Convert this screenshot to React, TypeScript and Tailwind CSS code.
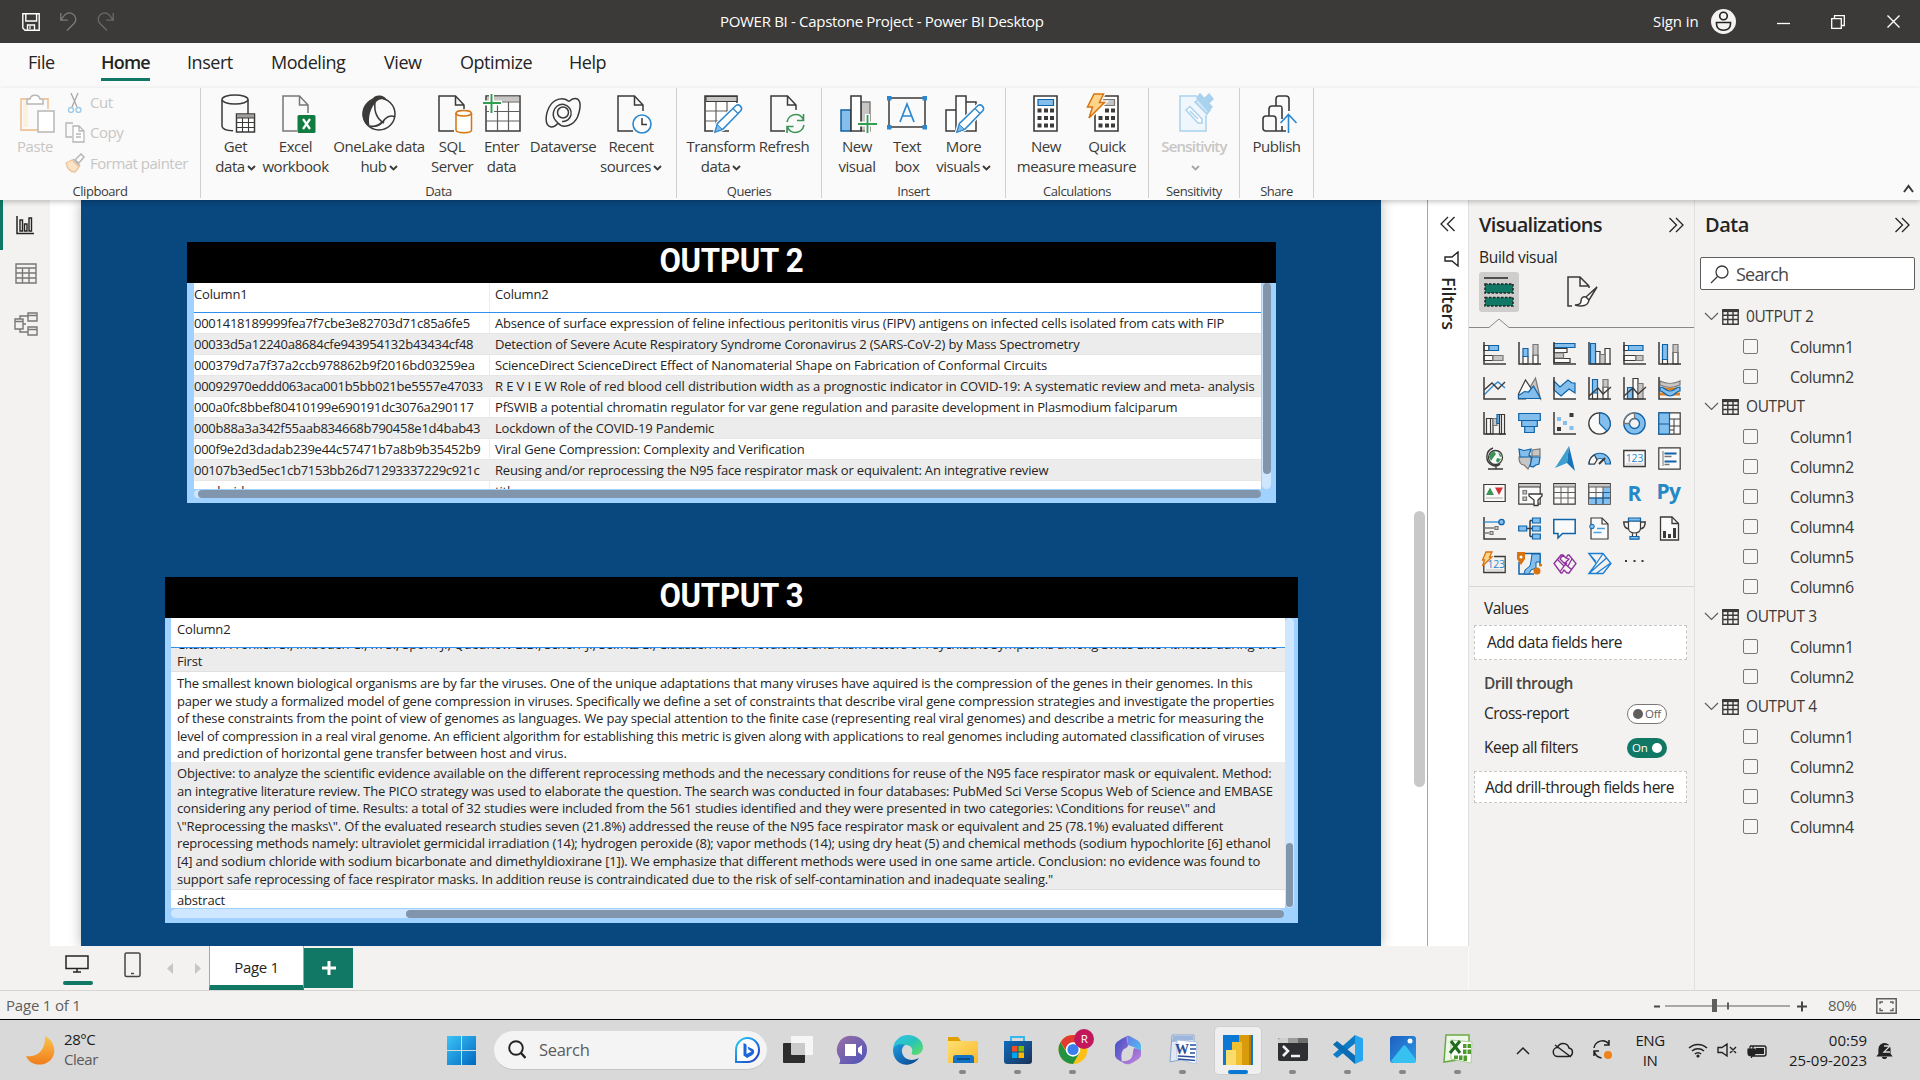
import React from "react";

type Kids = { children?: React.ReactNode };

const DARK = "#3b3a39";
const BLUE = "#83beec";
const BSTROKE = "#0f63a8";
const GRAY = "#c8c6c4";
const GSTROKE = "#797775";
const WHITE = "#fafafa";

/* ---------- generic helpers ---------- */

function Svg({ w, h, className = "", children }: Kids & { w: number; h: number; className?: string }) {
  return (
    <svg width={w} height={h} viewBox={`0 0 ${w} ${h}`} fill="none" className={`shrink-0 ${className}`}>
      {children}
    </svg>
  );
}

function Caret({ color = DARK }: { color?: string }) {
  return (
    <Svg w={9} h={6} className="ml-[2px] mt-[4px]">
      <path d="M1 1l3.5 3.4L8 1" stroke={color} strokeWidth="1.9" />
    </Svg>
  );
}

/* ---------- title bar ---------- */

function TitleBar() {
  return (
    <header className="flex h-[43px] shrink-0 items-center bg-[#3b3a38] text-[15px] text-white">
      <div className="flex w-[720px] items-center pl-[22px]">
        <Svg w={18} h={18}>
          <path d="M.8.8h16.4v16.4H3L.8 15z M3.8 1v7h10.8V1 M5.5 17v-5h7v5" stroke="#fff" strokeWidth="1.4" />
          <path d="M8 13v3" stroke="#fff" strokeWidth="1.2" />
        </Svg>
        <Svg w={17} h={19} className="ml-[20px]">
          <path d="M.8 1v7.2h7M1 8C4 2.5 8-.5 12 1.5c4 2 5 6.5 2 10L7 18.5" stroke="#7d7c7b" strokeWidth="1.3" />
        </Svg>
        <Svg w={17} h={19} className="ml-[20px]">
          <path d="M16.2 1v7.2h-7M16 8C13 2.5 9-.5 5 1.5c-4 2-5 6.5-2 10l7 7" stroke="#6b6a69" strokeWidth="1.3" />
        </Svg>
      </div>
      <div className="w-[933px] whitespace-nowrap tracking-[-0.31px]">POWER BI - Capstone Project - Power BI Desktop</div>
      <div className="w-[58px] whitespace-nowrap tracking-[-0.1px]">Sign in</div>
      <Svg w={25} h={25}>
        <circle cx="12.5" cy="12.5" r="12.5" fill="#f3f2f1" />
        <circle cx="12.5" cy="7" r="3.8" stroke="#222" strokeWidth="1.6" />
        <path d="M5.5 13.5h14V15c0 4-3 6.200-7 6.200S5.500 19 5.500 15z" stroke="#222" strokeWidth="1.6" />
      </Svg>
      <Svg w={13} h={14} className="ml-[41px]">
        <path d="M0 8.500h13" stroke="#fff" strokeWidth="1.300" />
      </Svg>
      <Svg w={14} h={14} className="ml-[41px]">
        <path d="M.7 3.700h9.600v9.600H.7zM3.500 3.500V.7h9.800v9.800h-3" stroke="#fff" strokeWidth="1.300" />
      </Svg>
      <Svg w={13} h={13} className="ml-[42px]">
        <path d="M.5.5l12 12M12.500.5l-12 12" stroke="#fff" strokeWidth="1.400" />
      </Svg>
    </header>
  );
}

/* ---------- menu ---------- */

function MenuBar() {
  return (
    <nav className="flex h-[45px] shrink-0 text-[18px] leading-[38px] text-[#252423]">
      <span className="w-[101px] pl-[28px]">File</span>
      <span className="flex w-[86px] items-start">
        <span className="h-[38px] border-b-[3px] border-[#117865] font-semibold tracking-[-0.8px]">Home</span>
      </span>
      <span className="w-[84px]">Insert</span>
      <span className="w-[113px]">Modeling</span>
      <span className="w-[76px]">View</span>
      <span className="w-[109px]">Optimize</span>
      <span>Help</span>
    </nav>
  );
}

/* ---------- ribbon icons: 40 x 40 box ---------- */

function Pencil() {
  return (
    <>
      <path d="M12 39l2.500-8.500L33 12.500c3-2 7 2 5 5L20 36z" fill="#fff" stroke="#fafafa" strokeWidth="4" />
      <path d="M12 39l2.500-8.500L33 12.500c3-2 7 2 5 5L20 36z" fill="#fff" stroke="#2b88d0" strokeWidth="1.500" />
      <path d="M12 39l2.300-7.500 5.200 5z" fill={BLUE} stroke="#2b88d0" />
      <path d="M30 15.500l5 5" stroke="#2b88d0" strokeWidth="1.300" />
    </>
  );
}

const ribbonIcons: Record<string, React.ReactNode> = {
  getdata: (
    <g transform="translate(5 0)">
      <path d="M27 7v14M1 7v26c0 2.500 4 4.500 11 4.800" stroke={DARK} strokeWidth="1.500" />
      <ellipse cx="14" cy="6.500" rx="13" ry="4.500" stroke={DARK} strokeWidth="1.500" />
      <path d="M15.500 21h18v18h-18z" fill="#fff" stroke={DARK} strokeWidth="1.500" />
      <path d="M16 21.500h17v3.500H16z" fill="#a19f9d" />
      <path d="M15.500 25h18M15.500 29.500h18M15.500 34.500h18M21.500 25v14M27.500 25v14" stroke={DARK} strokeWidth="1.100" />
    </g>
  ),
  excel: (
    <g transform="translate(6 0)">
      <path d="M26 20V12L17.500 3H1v35h14M17.500 3v9H26" stroke={GSTROKE} strokeWidth="1.500" />
      <rect x="15.500" y="22" width="18" height="18" rx="1.500" fill="#107c41" />
      <path d="M21 26l7 10M28 26l-7 10" stroke="#fff" strokeWidth="2.200" />
    </g>
  ),
  onelake: (
    <g transform="translate(2 0)">
      <circle cx="18" cy="21" r="16" stroke={DARK} strokeWidth="1.500" />
      <path d="M11 7C13 1 24 1 26 8c-5-3-8-2-11 1C10 14 6 25 9 34 2 30 0 22 3 15c1.500-3 4-6 8-8z" fill={DARK} />
      <path d="M14 9c-1 9 2 17 9 21M9 34c8-1 12-3 15-8 4-4 8-3 10-2M9 33c6 1 9 0 14-5" stroke={DARK} strokeWidth="1.500" />
    </g>
  ),
  sql: (
    <g transform="translate(6 0)">
      <path d="M26 16V12L17.500 3H1v35h15M17.500 3v9H26" stroke={DARK} strokeWidth="1.500" />
      <path d="M18 20v17c0 1.500 3 2.700 8 2.700s7.500-1.200 7.500-2.700V20" fill="#fff" stroke="#d8730f" strokeWidth="1.500" />
      <ellipse cx="25.700" cy="20.200" rx="7.700" ry="2.700" fill="#fff" stroke="#d8730f" strokeWidth="1.500" />
    </g>
  ),
  enter: (
    <g>
      <path d="M4 3h34v35H4z" stroke={DARK} strokeWidth="1.500" fill="#fff" />
      <path d="M5 3.500h32v5H5z" fill={GRAY} />
      <path d="M4 9h34M4 18.500h34M4 28h34M15.500 9v29M26.500 9v29" stroke="#605e5c" strokeWidth="1.200" />
      <path d="M0 10h20M9.500 0v20" stroke="#fafafa" strokeWidth="5" />
      <path d="M1 10h18M9.500 1v19" stroke="#2f9e4f" strokeWidth="1.900" />
    </g>
  ),
  dataverse: (
    <g transform="translate(2 4)" stroke={DARK} strokeWidth="1.500">
      <path d="M24 4.500C19-.5 9 1.500 4.500 9.500 0 18-.5 29 6 30c3 .5 5-1.500 7-4" />
      <path d="M13 26c5 6.500 16 2 19.500-6C36 11 36.500 2 30.500 1.500c-3-.3-4.500 1-6.500 3" />
      <path d="M13 26c-3.500-3-5.500-7-4.500-11C9.500 10 14 6.500 19 7.500c5 1 8 6 7 10.500-1 4-4.500 7-9 6.500" />
      <circle cx="18" cy="15.500" r="5.500" />
    </g>
  ),
  recent: (
    <g transform="translate(6 0)">
      <path d="M26 18V12L17.500 3H1v35h15M17.500 3v9H26" stroke={DARK} strokeWidth="1.500" />
      <circle cx="25" cy="31" r="9" fill="#fff" stroke="#2b88d0" strokeWidth="1.600" />
      <path d="M25 25v6.500h5" stroke={DARK} strokeWidth="1.500" />
    </g>
  ),
  transform: (
    <g transform="translate(2 0)">
      <path d="M34 18V3H2v35h24" fill="#fff" stroke={DARK} strokeWidth="1.600" />
      <path d="M3 3.500h31v5H3z" fill={GRAY} stroke={DARK} />
      <path d="M2 18h30M2 28h20M13 9v29M24 9v20" stroke="#605e5c" strokeWidth="1.200" />
      <Pencil />
    </g>
  ),
  refresh: (
    <g transform="translate(6 0)">
      <path d="M26 17V12L17.500 3H1v35h14M17.500 3v9H26" stroke={DARK} strokeWidth="1.500" />
      <path d="M17 29c1-5 5-7.500 9-7.500 3.500 0 6 2 7.500 5.500M33.500 21v6.500H27M34 32c-1 5-5 7.500-9 7.500-3.500 0-6-2-7.500-5.500M17 40v-6.500h6.500" stroke="#3c9455" strokeWidth="1.600" />
    </g>
  ),
  newvisual: (
    <g transform="translate(3 0)">
      <path d="M21 9h9v29h-9z" fill={GRAY} stroke={GSTROKE} strokeWidth="1.400" />
      <path d="M1 17h10v21H1z" fill={BLUE} stroke={BSTROKE} strokeWidth="1.500" />
      <path d="M11 3h10v35H11z" fill="#fff" stroke={DARK} strokeWidth="1.600" />
      <path d="M18 31h20M27.500 21v20" stroke="#fafafa" strokeWidth="5" />
      <path d="M18 31h19M27.500 22v18" stroke="#2f9e4f" strokeWidth="1.800" />
    </g>
  ),
  textbox: (
    <g>
      <path d="M2 5h36v29H2z" stroke={DARK} strokeWidth="1.500" />
      <path d="M0 3h4.500v4.500H0zM35.500 3H40v4.500h-4.500zM0 32h4.500v4.500H0zM35.500 32H40v4.500h-4.500z" fill="#2b88d0" />
      <path d="M13 29l7-18 7 18M15.300 23h9.400" stroke="#2b88d0" strokeWidth="1.700" />
    </g>
  ),
  morevisuals: (
    <g transform="translate(1 0)">
      <path d="M1 17h10v21H1zM11 3h10v35H11zM21 9h10v29H21z" fill="#fff" stroke={DARK} strokeWidth="1.500" />
      <Pencil />
    </g>
  ),
  newmeasure: (
    <g transform="translate(7 0)">
      <path d="M1 3h23v35H1z" fill="#fff" stroke={DARK} strokeWidth="1.600" />
      <path d="M5 6.500h15.500v6H5z" fill={BLUE} stroke={BSTROKE} strokeWidth="1.200" />
      <path d="M4.500 15.500h4v4h-4zM11 15.500h4v4h-4zM17 15.500h4v4h-4zM4.500 23h4v4h-4zM11 23h4v4h-4zM17 23h4v4h-4zM4.500 30.500h4v4h-4zM11 30.500h4v4h-4zM17 30.500h4v4h-4z" fill={DARK} />
    </g>
  ),
  quick: (
    <g transform="translate(7 0)">
      <path d="M1 3h23v35H1z" fill="#fff" stroke={DARK} strokeWidth="1.600" />
      <path d="M8 6.500h12.500v6H8z" fill={GRAY} stroke={GSTROKE} strokeWidth="1.200" />
      <path d="M11 15.500h4v4h-4zM17 15.500h4v4h-4zM4.500 23h4v4h-4zM11 23h4v4h-4zM17 23h4v4h-4zM4.500 30.500h4v4h-4zM11 30.500h4v4h-4zM17 30.500h4v4h-4z" fill={DARK} />
      <path d="M0 1h9.500l-4 8.500h5L-5 25l3.500-11h-5z" fill="#fac775" stroke="#fafafa" strokeWidth="4" />
      <path d="M0 1h9.500l-4 8.500h5L-5 25l3.500-11h-5z" fill="#fcd48a" stroke="#d8730f" strokeWidth="1.500" />
    </g>
  ),
  sensitivity: (
    <g transform="translate(5 0)" stroke="#a9d2ee" strokeWidth="1.500">
      <path d="M18 3H1v35h26V22" fill="#eff6fc" />
      <path d="M7 17l4-3.500L23 26v4h-4zM11 18l8 8" fill="#fff" />
      <path d="M16 9l4-3 11 11-3 4z" fill="#cfe6f6" />
      <path d="M18 5l3-4 12 13-4 4zM26 5l4-4 4 5-4 4z" fill="#a9d2ee" />
    </g>
  ),
  publish: (
    <g transform="translate(5 0)" stroke={DARK} strokeWidth="1.600">
      <path d="M14 13V6c0-2 1-3 3-3h7c2 0 3 1 3 3v12M7 23v-7c0-2 1-3 3-3h8c2 0 2 1 2 3v10M24 38H4c-2 0-3-1-3-3V26c0-2 1-3 3-3h7c2 0 3 1 3 3v12M20 33v5" />
      <path d="M26.500 40V22M18.500 30l8-8.500 8 8.500" stroke="#2b88d0" />
    </g>
  ),
};

function RibbonItem({ icon, a, b, w, caret, muted }: { icon: string; a: string; b?: string; w: string; caret?: boolean; muted?: boolean }) {
  return (
    <div className={`flex shrink-0 flex-col items-center whitespace-nowrap leading-[20px] ${w} ${muted ? "text-[#c8c6c4]" : "text-[#3b3a39]"}`}>
      <Svg w={40} h={41} className="mb-[2px] overflow-visible">
        {ribbonIcons[icon]}
      </Svg>
      <span className={muted ? "font-semibold tracking-[-0.8px]" : ""}>{a}</span>
      <span className="flex h-[20px] items-center">
        {b}
        {caret && <Caret color={muted ? "#a8a6a4" : DARK} />}
      </span>
    </div>
  );
}

function Group({ w, label, children, pad = "" }: Kids & { w: string; label: string; pad?: string }) {
  return (
    <section className={`flex shrink-0 flex-col border-r border-[#d2d0ce] ${w}`}>
      <div className={`flex h-[94px] shrink-0 pt-[5px] ${pad}`}>{children}</div>
      <div className="text-center text-[13px] leading-[18px] text-[#3b3a39]">{label}</div>
    </section>
  );
}

function Ribbon() {
  return (
    <div className="relative z-10 flex h-[112px] shrink-0 bg-[#fafafa] text-[15px] shadow-[0_2px_5px_rgba(0,0,0,0.22)]">
      <div className="flex h-[110px]">
        <Group w="w-[201px]" label="Clipboard">
          <div className="flex w-[65px] flex-col items-center pl-[5px] leading-[20px] text-[#c8c6c4]">
            <Svg w={36} h={41} className="mb-[2px] ml-[6px]">
              <path d="M10 6H1v31h17M24 6h4v10" stroke="#f0c9a0" strokeWidth="1.800" />
              <path d="M3 8h5v26H3z" fill="#fdf1dc" />
              <path d="M7 11V6h3c1-5 9-5 10 0h3v5z" fill="#fff" stroke="#b9b7b5" strokeWidth="1.500" />
              <path d="M18 18h16v21H18z" fill="#fff" stroke="#b9b7b5" strokeWidth="1.500" />
            </Svg>
            <span>Paste</span>
          </div>
          <div className="flex flex-col text-[#c8c6c4]">
            <div className="flex h-[30px] items-center pb-[11px]">
              <Svg w={20} h={20} className="mr-[5px]">
                <path d="M6 0l6 14M13 0L7 14" stroke="#a8a6a4" strokeWidth="1.300" />
                <circle cx="6" cy="17" r="2.500" stroke="#9fcbe9" strokeWidth="1.400" />
                <circle cx="13.500" cy="17" r="2.500" stroke="#9fcbe9" strokeWidth="1.400" />
              </Svg>
              Cut
            </div>
            <div className="flex h-[30px] items-center pb-[11px]">
              <Svg w={20} h={21} className="mr-[5px]">
                <path d="M7 15H1V1h7" stroke="#b9b7b5" strokeWidth="1.400" />
                <path d="M8 4h6l5 5v11H8zM14 4v5h5M11 12h5M11 15h5" fill="#fff" stroke="#b9b7b5" strokeWidth="1.300" />
              </Svg>
              Copy
            </div>
            <div className="flex h-[29px] items-center whitespace-nowrap pb-[9px] tracking-[-0.5px]">
              <Svg w={20} h={20} className="mr-[5px]">
                <path d="M10 7l6-6 3 3-5 6z M8 6l7 7" stroke="#b9b7b5" strokeWidth="1.500" />
                <path d="M7 7l7 7-4 5c-5 0-8-4-9-9z" fill="#fbe3c8" stroke="#eec39a" strokeWidth="1.300" />
              </Svg>
              Format painter
            </div>
          </div>
        </Group>
        <Group w="w-[476px]" label="Data" pad="pl-[6px]">
          <RibbonItem icon="getdata" a="Get" b="data" caret w="w-[57px]" />
          <RibbonItem icon="excel" a="Excel" b="workbook" w="w-[63px]" />
          <RibbonItem icon="onelake" a="OneLake data" b="hub" caret w="w-[104px]" />
          <RibbonItem icon="sql" a="SQL" b="Server" w="w-[42px]" />
          <RibbonItem icon="enter" a="Enter" b="data" w="w-[57px]" />
          <RibbonItem icon="dataverse" a="Dataverse" w="w-[66px]" />
          <RibbonItem icon="recent" a="Recent" b="sources" caret w="w-[70px]" />
        </Group>
        <Group w="w-[145px]" label="Queries" pad="pl-[10px]">
          <RibbonItem icon="transform" a="Transform" b="data" caret w="w-[68px]" />
          <RibbonItem icon="refresh" a="Refresh" w="w-[58px]" />
        </Group>
        <Group w="w-[184px]" label="Insert" pad="pl-[14px]">
          <RibbonItem icon="newvisual" a="New" b="visual" w="w-[42px]" />
          <RibbonItem icon="textbox" a="Text" b="box" w="w-[58px]" />
          <RibbonItem icon="morevisuals" a="More" b="visuals" caret w="w-[55px]" />
        </Group>
        <Group w="w-[143px]" label="Calculations" pad="pl-[10px]">
          <RibbonItem icon="newmeasure" a="New" b="measure" w="w-[60px]" />
          <RibbonItem icon="quick" a="Quick" b="measure" w="w-[62px]" />
        </Group>
        <Group w="w-[91px]" label="Sensitivity">
          <RibbonItem icon="sensitivity" a="Sensitivity" caret muted w="w-[90px]" />
        </Group>
        <Group w="w-[74px]" label="Share">
          <RibbonItem icon="publish" a="Publish" w="w-[73px]" />
        </Group>
      </div>
      <div className="flex flex-1 items-end justify-end pb-[7px] pr-[6px]">
        <Svg w={11} h={9}>
          <path d="M1 8l4.500-6L10 8" stroke={DARK} strokeWidth="2" />
        </Svg>
      </div>
    </div>
  );
}

/* ---------- left navigation ---------- */

function LeftNav() {
  return (
    <aside className="flex w-[50px] shrink-0 flex-col bg-[#f3f2f1]">
      <div className="flex h-[50px] border-l-[3px] border-[#117865] pl-[13px] pt-[16px]">
        <Svg w={18} h={19}>
          <path d="M1 0v17.500h17" stroke="#252423" strokeWidth="1.500" />
          <path d="M4 4h2.500v11H4zM8.500 8H11v7H8.500zM13 2h2.500v13H13z" stroke="#252423" strokeWidth="1.400" />
        </Svg>
      </div>
      <div className="flex h-[50px] pl-[15px] pt-[13px]">
        <Svg w={22} h={21}>
          <path d="M1 1h20v19H1zM1 5h20M1 10h20M1 15h20M7.500 5v15M14 5v15" stroke="#797775" strokeWidth="1.400" />
        </Svg>
      </div>
      <div className="flex h-[50px] pl-[14px] pt-[12px]">
        <Svg w={24} h={24}>
          <path d="M1 7h8v10H1zM14 1h9v8h-9zM14 15h9v8h-9zM1 9.500h8M14 3.500h9M14 17.500h9M6 7V4h8M6 17v3h8M9 12h3" stroke="#797775" strokeWidth="1.400" />
        </Svg>
      </div>
    </aside>
  );
}

/* ---------- report visuals ---------- */

function VisualTitle({ children }: Kids) {
  return (
    <div className="flex h-[41px] shrink-0 items-center justify-center bg-black pb-[3px] font-['Roboto',sans-serif] text-[33.5px] font-bold leading-none text-white">
      <span className="scale-x-[0.93] tracking-[-0.3px]">{children}</span>
    </div>
  );
}

const rows2: [string, string][] = [
  ["0001418189999fea7f7cbe3e82703d71c85a6fe5", "Absence of surface expression of feline infectious peritonitis virus (FIPV) antigens on infected cells isolated from cats with FIP"],
  ["00033d5a12240a8684cfe943954132b43434cf48", "Detection of Severe Acute Respiratory Syndrome Coronavirus 2 (SARS-CoV-2) by Mass Spectrometry"],
  ["000379d7a7f37a2ccb978862b9f2016bd03259ea", "ScienceDirect ScienceDirect Effect of Nanomaterial Shape on Fabrication of Conformal Circuits"],
  ["00092970eddd063aca001b5bb021be5557e47033", "R E V I E W Role of red blood cell distribution width as a prognostic indicator in COVID-19: A systematic review and meta- analysis"],
  ["000a0fc8bbef80410199e690191dc3076a290117", "PfSWIB a potential chromatin regulator for var gene regulation and parasite development in Plasmodium falciparum"],
  ["000b88a3a342f55aab834668b790458e1d4bab43", "Lockdown of the COVID-19 Pandemic"],
  ["000f9e2d3dadab239e44c57471b7a8b9b35452b9", "Viral Gene Compression: Complexity and Verification"],
  ["00107b3ed5ec1cb7153bb26d71293337229c921c", "Reusing and/or reprocessing the N95 face respirator mask or equivalent: An integrative review"],
  ["cord_uid", "title"],
];

function Output2() {
  return (
    <div className="ml-[106px] flex h-[261px] w-[1089px] flex-col bg-[#a0d1ff]">
      <VisualTitle>OUTPUT 2</VisualTitle>
      <div className="flex h-[206px] pl-[7px]">
        <div className="flex w-[1067px] flex-col overflow-hidden whitespace-nowrap bg-white text-[13px] tracking-[-0.18px] text-[#252423]">
          <div className="flex h-[30px] shrink-0 border-b border-[#2e8fef] leading-[23px]">
            <span className="w-[296px] border-r border-[#e3f0fc]">Column1</span>
            <span className="pl-[5px]">Column2</span>
          </div>
          {rows2.map(([a, b], i) => (
            <div key={a} className={`flex h-[21px] shrink-0 border-b border-[#e6e6e6] leading-[21px] ${i % 2 ? "bg-[#ececec]" : "bg-white"}`}>
              <span className="w-[296px] border-r border-[#e3f0fc] tracking-[-0.25px]">{a}</span>
              <span className={`pl-[5px] ${i === 3 ? "tracking-[-0.12px]" : ""}`}>{b}</span>
            </div>
          ))}
        </div>
        <div className="ml-px w-[9px] rounded-full bg-[#cfe6ff] pl-px">
          <div className="h-[191px] w-[8px] rounded-full bg-[#8196ad]" />
        </div>
      </div>
      <div className="ml-[7px] mt-px h-[8px] w-[1067px] rounded-full bg-[#cfe6ff] pl-[4px]">
        <div className="h-[8px] rounded-full bg-[#8196ad]" />
      </div>
    </div>
  );
}

const para1 = [
  "The smallest known biological organisms are by far the viruses. One of the unique adaptations that many viruses have aquired is the compression of the genes in their genomes. In this",
  "paper we study a formalized model of gene compression in viruses. Specifically we define a set of constraints that describe viral gene compression strategies and investigate the properties",
  "of these constraints from the point of view of genomes as languages. We pay special attention to the finite case (representing real viral genomes) and describe a metric for measuring the",
  "level of compression in a real viral genome. An efficient algorithm for establishing this metric is given along with applications to real genomes including automated classification of viruses",
  "and prediction of horizontal gene transfer between host and virus.",
];
const para2 = [
  "Objective: to analyze the scientific evidence available on the different reprocessing methods and the necessary conditions for reuse of the N95 face respirator mask or equivalent. Method:",
  "an integrative literature review. The PICO strategy was used to elaborate the question. The search was conducted in four databases: PubMed Sci Verse Scopus Web of Science and EMBASE",
  "considering any period of time. Results: a total of 32 studies were included from the 561 studies identified and they were presented in two categories: \\Conditions for reuse\\\" and",
  "\\\"Reprocessing the masks\\\". Of the evaluated research studies seven (21.8%) addressed the reuse of the N95 face respirator mask or equivalent and 25 (78.1%) evaluated different",
  "reprocessing methods namely: ultraviolet germicidal irradiation (14); hydrogen peroxide (8); vapor methods (14); using dry heat (5) and chemical methods (sodium hypochlorite [6] ethanol",
  "[4] and sodium chloride with sodium bicarbonate and dimethyldioxirane [1]). We emphasize that different methods were used in one same article. Conclusion: no evidence was found to",
  "support safe reprocessing of face respirator masks. In addition reuse is contraindicated due to the risk of self-contamination and inadequate sealing.\"",
];

function Output3() {
  return (
    <div className="ml-[84px] mt-[74px] flex h-[346px] w-[1133px] flex-col bg-[#a0d1ff]">
      <VisualTitle>OUTPUT 3</VisualTitle>
      <div className="flex h-[290px] pl-[6px]">
        <div className="flex w-[1114px] flex-col overflow-hidden whitespace-nowrap bg-white text-[13px] leading-[17.6px] tracking-[-0.185px] text-[#252423]">
          <div className="h-[30px] shrink-0 border-b border-[#2e8fef] pl-[6px] leading-[23px]">Column2</div>
          <div className="flex h-[24px] shrink-0 flex-col justify-end overflow-hidden border-b border-[#e0e0e0] bg-[#ececec] pl-[6px]">
            <p className="shrink-0">Citation: Fröhlich SI, Imboden CI, m SI, Sporn JI, Quednow B.BI, Scherr JI, Seifritz EI, Claussen M.C. Prevalence and Risk Factors of Psychiatric Symptoms among Swiss Elite Athletes during the</p>
            <p className="shrink-0">First</p>
          </div>
          <div className="h-[90px] shrink-0 pl-[6px] pt-[3px]">
            {para1.map((l) => <p key={l}>{l}</p>)}
          </div>
          <div className="h-[128px] shrink-0 border-b border-[#e0e0e0] bg-[#ececec] pl-[6px] pt-[3px]">
            {para2.map((l) => <p key={l}>{l}</p>)}
          </div>
          <div className="pl-[6px] pt-[2px]">abstract</div>
        </div>
        <div className="flex w-[9px] flex-col justify-end rounded-full bg-[#cfe6ff] pb-px pl-px">
          <div className="h-[64px] w-[7px] rounded-full bg-[#8196ad]" />
        </div>
      </div>
      <div className="ml-[6px] mt-px flex h-[9px] w-[1113px] items-center justify-end rounded-full bg-[#cfe6ff]">
        <div className="h-[8px] w-[878px] rounded-full bg-[#8196ad]" />
      </div>
    </div>
  );
}

function Canvas() {
  return (
    <main className="flex w-[1377px] shrink-0 overflow-hidden bg-white pl-[31px]">
      <div className="h-[746px] w-[1300px] shrink-0 bg-[#09477f] pt-[42px] shadow-[0_0_12px_rgba(0,0,0,0.28)]">
        <Output2 />
        <Output3 />
      </div>
      <div className="ml-[33px] mt-[311px] h-[276px] w-[11px] rounded-full bg-[#c8c8c8]" />
    </main>
  );
}

/* ---------- filters pane ---------- */

function DoubleChevron({ left }: { left?: boolean }) {
  return (
    <Svg w={16} h={16} className={left ? "rotate-180" : ""}>
      <path d="M1.500 1l7 7-7 7M8 1l7 7-7 7" stroke="#252423" strokeWidth="1.300" />
    </Svg>
  );
}

function FiltersPane() {
  return (
    <div className="flex w-[42px] shrink-0 flex-col items-center border-x border-l-[#a6a6a6] border-r-[#e1dfdd] bg-white pt-[16px]">
      <DoubleChevron left />
      <Svg w={15} h={16} className="ml-[6px] mt-[19px]">
        <path d="M14 1v14L8 10H1V6h7z" stroke="#252423" strokeWidth="1.400" />
      </Svg>
      <span className="ml-[2px] mt-[10px] text-[18px] font-semibold leading-[20px] tracking-[-0.1px] text-[#252423] [writing-mode:vertical-rl]">Filters</span>
    </div>
  );
}

/* ---------- visualization icons: 23 x 23 box ---------- */

const Axis = () => <path d="M1 0v22h22" stroke={DARK} strokeWidth="1.500" />;
const B = ({ d }: { d: string }) => <path d={d} fill={BLUE} stroke={BSTROKE} strokeWidth="1.200" />;
const G = ({ d }: { d: string }) => <path d={d} fill={GRAY} stroke={GSTROKE} strokeWidth="1.200" />;
const W = ({ d }: { d: string }) => <path d={d} fill={WHITE} stroke={DARK} strokeWidth="1.200" />;

const vizIcons: React.ReactNode[] = [
  <><W d="M1 3.500h5v5H1zM1 13.500h9v5H1z" /><B d="M6 3.500h9.500v5H6z" /><G d="M10 13.500h10v5H10z" /><Axis /></>,
  <><W d="M5 14.500h5V22H5zM15 13h5v9h-5z" /><B d="M5 6.500h5v8H5z" /><G d="M15 2.500h5V13h-5z" /><Axis /></>,
  <><W d="M1 6.500h13v4H1zM1 16.500h16v4H1z" /><G d="M1 11h9.500v5H1z" /><B d="M1 1.500h21v4H1z" /><Axis /></>,
  <><W d="M7.500 9.500H12V22H7.500zM17 6.500h5V22h-5z" /><G d="M12 12.500h5V22h-5z" /><B d="M2.500 1.500h5V22h-5z" /><Axis /></>,
  <><W d="M1 3.500h5v5H1zM1 13.500h12v5H1z" /><B d="M5.500 3.500H20v5H5.500z" /><G d="M13 13.500h7v5h-7z" /><Axis /></>,
  <><W d="M4.500 17.500h5V22h-5zM15 10.500h5V22h-5z" /><B d="M4.500 2.500h5v15h-5z" /><G d="M15 2.500h5v8h-5z" /><Axis /></>,
  <><path d="M1 18L11 8l4-3 7 6" stroke="#2b88d0" strokeWidth="1.400" /><path d="M1 13l8-7 6 6 7-7" stroke={DARK} strokeWidth="1.400" /><Axis /></>,
  <><G d="M11 12L17.500 1 22.500 22z" /><W d="M.5 17L7.500 3l6 9-6 10H.5z" /><B d="M.5 21.500v-3l6-4 4 .5 5-6 7 12.500z" /></>,
  <><path d="M1 13l7 6 6-5 8 5v3H1z" fill={WHITE} /><B d="M1 4l6 6 8-7 4 3h3v10l-6-4-8 7-7-6z" /><Axis /></>,
  <><W d="M4.500 15h5v7h-5zM15 10h5v12h-5z" /><B d="M4.500 2.500h5V16h-5z" /><G d="M15 2.500h5V10h-5z" /><path d="M1 19l9-8 5 6 8-7" stroke={DARK} strokeWidth="1.400" /><Axis /></>,
  <><B d="M4.500 10.500h5V22h-5z" /><W d="M10 1.500h5V22h-5z" /><G d="M15 6.500h5V22h-5z" /><path d="M1 19l9-8 5 6 8-7" stroke={DARK} strokeWidth="1.400" /><Axis /></>,
  <><path d="M2 12h20M2 17h20" stroke="#e0811f" strokeWidth="3" /><G d="M2 4c6 3 14 3 20 0v4c-6 3-14 3-20 0z" /><B d="M2 10c5 0 5 4 10 4s5-4 10-4v4c-4 0-5 5-10 5S6 14 2 14z" /><Axis /></>,
  <><W d="M3.500 6.500h4V22h-4zM7.500 6.500H10V22H7.500zM17.500 2.500h4V22h-4z" /><G d="M10 6.500h4v7h-4z" /><B d="M14 2.500h2.500v9H14z" /><W d="M16.500 2.500h2V22h-2z" /><Axis /></>,
  <B d="M.7 1.500h21.600v7H.7zM3.700 8.500h15.600v6H3.700zM6.700 14.500h9.600v6H6.700z" />,
  <><Axis /><path d="M4 5h4v4H4zM10 9h4v4h-4zM16.500 14h4v4h-4z" fill={BLUE} /><path d="M16.500 1h4v4h-4zM4 15h4v4H4z" fill={DARK} /></>,
  <><circle cx="11.500" cy="11.500" r="10.700" fill={WHITE} stroke={DARK} strokeWidth="1.300" /><B d="M11.500.8a10.700 10.700 0 017.500 18.300l-7.500-7.600z" /></>,
  <><path d="M11.500 4a7.500 7.500 0 11-7.500 7.500" stroke={BLUE} strokeWidth="6" /><path d="M4 11.500A7.500 7.500 0 0111.500 4" stroke={WHITE} strokeWidth="6" /><circle cx="11.500" cy="11.500" r="10.700" stroke={BSTROKE} strokeWidth="1.300" /><circle cx="11.500" cy="11.500" r="5" fill="#f3f2f1" stroke={BSTROKE} strokeWidth="1.300" /><path d="M.8 11.500A10.700 10.700 0 0111.500.8V6.500M.8 11.500h5.500a5 5 0 015.200-5" stroke={GSTROKE} strokeWidth="1.300" /></>,
  <><W d="M.8.8h21.400v21.400H.8z" /><B d="M.8.8h10.700v21.400H.8z" /><path d="M.8 12h10.700" stroke={BSTROKE} /><path d="M11.500 7H22M16 7v15M11.500 14H16M16 14h6M16 18h-4" stroke={DARK} /></>,
  <><circle cx="12.500" cy="10.500" r="7" fill={WHITE} stroke={DARK} strokeWidth="1.300" /><path d="M7 7l4-3 2 3-3 4-2 3-2-4zM15 5l4 4-2 1zM14 11l4 1-3 4-2-2z" fill="#3c9455" /><path d="M10 1C2 4 2 15 9 18c3 1.500 6 1 8-1M13 18v4M5 22h15" stroke={DARK} strokeWidth="1.400" /></>,
  <><G d="M1 10c0 4 1 8 5 8l4 4 3-6V9zM14 3l8-1v7h-8z" /><B d="M1 2l5 1.500 7-1.500-2 6 2 2H2zM14 10h8l-1 7-3 1-3 2-3-1z" /></>,
  <><path d="M16 -1L2 21l12-5z" fill="#3f9fcf" /><path d="M16 -1l6 25-8-8z" fill="#1673b8" /></>,
  <><path d="M1 17a10.500 10.500 0 0121.500 0h-5a5.500 5.500 0 00-11 0z" fill={BLUE} stroke={BSTROKE} strokeWidth="1.200" /><path d="M1 17A10.500 10.500 0 016.500 8l2.500 5-2.500 4z" fill={WHITE} stroke={DARK} strokeWidth="1.200" /><path d="M11 17l6-6" stroke={DARK} strokeWidth="2" /></>,
  <><path d="M.8 3.500h21.400v16H.8z" fill={WHITE} stroke={DARK} strokeWidth="1.400" /><text x="2.800" y="14.500" fontSize="10.500" letterSpacing="-.2" fill="#2b88d0">123</text><path d="M3 17h17" stroke={GRAY} /></>,
  <><W d="M.8.8h21.400v21.400H.8z" /><path d="M5 4v15" stroke={GSTROKE} /><path d="M6.500 6.500h12M6.500 14.500h12" stroke={BSTROKE} strokeWidth="2" /><path d="M6.500 9.500h7M6.500 17.500h5" stroke={GSTROKE} strokeWidth="1.300" /></>,
  <><W d="M.8 2.500h21.400v17H.8z" /><path d="M3 13l4-7.500 4 7.500z" fill="#3c9455" /><path d="M12 5.500h8L16 13z" fill="#d13438" /><path d="M3 16h17" stroke={GRAY} strokeWidth="1.500" /></>,
  <><W d="M.8 1.500h21.400v20.700H.8z" /><path d="M1.500 2h20v3h-20z" fill={GRAY} /><path d="M.8 5h21.400" stroke={DARK} /><G d="M5 8.500h3.500V12H5zM5 15h3.500v3.500H5z" /><path d="M11 12h13v2l-4 4v5.500h-4V18l-5-4z" fill="#fff" stroke={DARK} strokeWidth="1.300" /></>,
  <><W d="M.8 1.500h21.400v20.700H.8z" /><path d="M1.500 2h20v3h-20z" fill={GRAY} /><path d="M.8 5h21.400M.8 10.500h21.400M.8 16h21.400M8 5v17M15 5v17" stroke="#605e5c" /></>,
  <><W d="M.8 1.500h21.400v20.700H.8z" /><path d="M1.500 2h20v3h-20z" fill={GRAY} /><path d="M15 5h7v17H1v-6h14z" fill={BLUE} /><path d="M.8 5h21.400M.8 10.500h21.400M.8 16h21.400M8 5v17M15 5v17" stroke="#605e5c" /><path d="M15 10.500h7M.8 16h21.400M8 16v6M15 10v12" stroke={BSTROKE} /></>,
  <text x="4.500" y="18.500" fontSize="21" fontWeight="700" fill="#2588c7">R</text>,
  <text x="-1.500" y="17" fontSize="21" fontWeight="700" letterSpacing="-.6" fill="#2588c7">Py</text>,
  <><Axis /><path d="M1 5h15" stroke="#2b88d0" strokeWidth="1.300" /><circle cx="18.500" cy="5" r="2.700" fill={BLUE} stroke={BSTROKE} strokeWidth="1.300" /><path d="M1 11h10M1 16h5" stroke={GSTROKE} strokeWidth="1.300" /><G d="M12 9.500h3v3h-3zM7 14.500h3v3H7z" /></>,
  <><path d="M8 11.500h4M12 3.500v16M12 3.500h3M12 11.500h3M12 19.500h3" stroke={DARK} strokeWidth="1.500" /><B d="M.7 9h8v5h-8zM14.500 1h7.800v5h-7.800zM14.500 9h7.800v5h-7.800zM14.500 17h7.800v5h-7.800z" /></>,
  <path d="M.8 2.500h21.400v14H9.500L5 21v-4.500H.8z" fill={WHITE} stroke={BSTROKE} strokeWidth="1.500" />,
  <><W d="M3 1h11l6 6v15H3z" /><path d="M14 1v6h6" stroke={DARK} strokeWidth="1.200" /><path d="M9 11.500h8M5.500 15.500h8" stroke="#4aa3dd" strokeWidth="1.300" /><circle cx="4" cy="9.500" r="2.300" fill={BLUE} stroke={BSTROKE} /></>,
  <><path d="M5 5H.8c0 4 1 7 6 7M18 5h4.200c0 4-1 7-6 7" stroke={DARK} strokeWidth="1.500" /><W d="M5.500 4h12v7c0 3-2 5-6 5s-6-2-6-5zM9.500 16h4v4h-4z" /><B d="M5.500 1h12v3h-12zM7 19.500h9v2.700H7z" /></>,
  <><path d="M2.500 0H14l6.500 6.500V23h-18z" fill={WHITE} stroke={DARK} strokeWidth="1.300" /><path d="M14 0v6.500h6.500" stroke={DARK} strokeWidth="1.300" /><path d="M5 14h3v7H5zM10 17h3v4h-3zM15 11h3v10h-3z" fill={DARK} /></>,
  <><path d="M11 4.500h11.200v16H.8V13" fill="none" stroke={DARK} strokeWidth="1.300" /><text x="4.500" y="16" fontSize="10.500" letterSpacing="-.2" fill="#2b88d0">123</text><path d="M3 18h17" stroke={GRAY} /><path d="M3 0h6L6.500 5H9L-.5 14l2-6h-2z" fill="#fcd48a" stroke="#d8730f" strokeWidth="1.300" /></>,
  <><path d="M7 1.500h15V14M16 22H1V10" stroke={BSTROKE} strokeWidth="1.500" /><path d="M14 2h8v8h-4v6l-5 2-2 4H6l1-4 5-4 1-5z" fill={BLUE} stroke={BSTROKE} /><path d="M-1 0h8v7l-4 6-4-6z" fill="#d8730f" /><circle cx="3" cy="5" r="1.500" fill="#fff" /><circle cx="19" cy="19" r="3.500" fill="#d8730f" /><circle cx="22.500" cy="13" r="1.600" fill="#d8730f" /></>,
  <path d="M1 11.500L8 3h2l3 3 2-3h1l7 8.500L16 21h-2l-3-3-2 3H8zM4.500 7.500L11 14l-3.500 5M10 3l-3 4 4.500 4.500L16 7l-3-1M11.500 11.500L19 18M11 14l3-3M15 14l4-7" stroke="#8f2f9e" strokeWidth="1.300" />,
  <path d="M.8 1.500H15l8 10-8 10H.8l7.500-10zM8.300 11.500L15 1.500M1 21.500L18.500 6M8 21.500L22 11.500M.8 1.500l7 8" stroke="#1d7fd4" strokeWidth="1.300" />,
  <path d="M2 8h2v2H2zM10.500 8h2v2h-2zM18.500 8h2v2h-2z" fill={DARK} />,
];

function Toggle({ on }: { on?: boolean }) {
  return on ? (
    <span className="flex h-[20px] w-[40px] items-center rounded-full bg-[#117865] pl-[5px] text-[11.5px] leading-none tracking-[-0.2px] text-white">
      On<span className="ml-[4px] h-[10px] w-[10px] rounded-full bg-white" />
    </span>
  ) : (
    <span className="flex h-[20px] w-[40px] items-center rounded-full border border-[#797775] bg-white pl-[5px] text-[11.5px] leading-none tracking-[-0.3px] text-[#605e5c]">
      <span className="mr-[2px] h-[10px] w-[10px] rounded-full bg-[#605e5c]" />
      Off
    </span>
  );
}

function VisualizationsPane() {
  return (
    <section className="flex w-[226px] shrink-0 flex-col border-r border-[#e1dfdd] bg-[#f3f2f1] text-[15.5px] tracking-[-0.5px] text-[#252423]">
      <div className="flex h-[45px] items-center justify-between pl-[10px] pr-[10px] pt-[4px]">
        <h2 className="text-[20px] font-semibold leading-[28px] tracking-[-0.7px]">Visualizations</h2>
        <DoubleChevron />
      </div>
      <div className="h-[27px] pl-[10px] leading-[25px] tracking-[-0.3px]">Build visual</div>
      <div className="flex h-[46px] pl-[10px]">
        <div className="flex h-[40px] w-[40px] items-center justify-center rounded-[3px] bg-[#d0cecc]">
          <Svg w={30} h={30}>
            <path d="M0 1h24" stroke="#252423" strokeWidth="1.500" />
            <path d="M1 7h28v9H1zM1 20.500h28v8.500H1z" fill="#117865" stroke="#252423" strokeWidth="1.500" strokeDasharray="2.500 1.500" />
          </Svg>
        </div>
        <Svg w={32} h={31} className="ml-[48px] mt-[4px]">
          <path d="M5 30H1V1h12l9 9M13 1v9h9M22 10v2" stroke={DARK} strokeWidth="1.500" />
          <path d="M30 11L19 21l3 3 8-13zM19 21c-3-1-5 1-5 4s-2 4-6 4c7 2 13 1 14-5" fill="#fff" stroke={DARK} strokeWidth="1.500" />
        </Svg>
      </div>
      <Svg w={225} h={11}>
        <path d="M0 9.500h20L30 1l10 8.500h185" stroke="#8a8886" />
      </Svg>
      <div className="mt-[13px] grid w-[224px] grid-cols-[repeat(6,35px)] gap-y-[12px] pl-[14px]">
        {vizIcons.map((ic, i) => (
          <Svg key={i} w={23} h={23} className="overflow-visible">
            {ic}
          </Svg>
        ))}
      </div>
      <div className="mt-[11px] border-t border-[#d8d6d4] pl-[15px] pt-[9px] leading-[24px]">Values</div>
      <div className="ml-[5px] mt-[5px] h-[35px] w-[213px] whitespace-nowrap border border-dashed border-[#c8c6c4] bg-white pl-[12px] leading-[32px]">Add data fields here</div>
      <div className="mt-[11px] pl-[15px] text-[15.5px] font-semibold leading-[24px] tracking-[-0.5px] text-[#484644]">Drill through</div>
      <div className="mt-[3px] flex h-[34px] items-center justify-between pb-[2px] pl-[15px] pr-[27px]">
        Cross-report
        <Toggle />
      </div>
      <div className="flex h-[34px] items-center justify-between pb-[2px] pl-[15px] pr-[27px]">
        Keep all filters
        <Toggle on />
      </div>
      <div className="ml-[5px] mt-[5px] h-[32px] w-[213px] whitespace-nowrap border border-dashed border-[#c8c6c4] bg-white pl-[10px] leading-[31px]">Add drill-through fields here</div>
    </section>
  );
}

/* ---------- data pane ---------- */

const tree: [string, number][] = [["0UTPUT 2", 2], ["OUTPUT", 6], ["OUTPUT 3", 2], ["OUTPUT 4", 4]];

function DataPane() {
  return (
    <section className="flex flex-1 flex-col bg-[#f3f2f1] text-[16px] text-[#252423]">
      <div className="flex h-[57px] items-start justify-between pl-[10px] pr-[10px] pt-[10px]">
        <h2 className="text-[20px] font-semibold leading-[30px] tracking-[-0.5px]">Data</h2>
        <span className="pt-[7px]">
          <DoubleChevron />
        </span>
      </div>
      <div className="ml-[5px] flex h-[33px] w-[215px] items-center rounded-[2px] border border-[#605e5c] bg-white pl-[9px] pt-px text-[18px] tracking-[-0.8px] text-[#484644]">
        <Svg w={19} h={19} className="mr-[7px]">
          <circle cx="12" cy="7" r="6" stroke={DARK} strokeWidth="1.300" />
          <path d="M7.500 11.500L1 18" stroke={DARK} strokeWidth="1.300" />
        </Svg>
        Search
      </div>
      <div className="mt-[12px] flex flex-col">
        {tree.map(([name, n]) => (
          <React.Fragment key={name}>
            <div className="flex h-[30px] items-center pb-px pl-[9px] text-[15.5px] tracking-[-0.4px] text-[#3b3a39]">
              <Svg w={15} h={9}>
                <path d="M1 1l6.500 6.500L14 1" stroke="#605e5c" strokeWidth="1.200" />
              </Svg>
              <Svg w={17} h={16} className="ml-[3px] mr-[7px]">
                <path d="M.8.8h15.400v14.400H.8zM.8 6.300h15.400M.8 10.500h15.400M5.800 2v13M11 2v13" stroke={DARK} strokeWidth="1.400" />
                <path d="M0 2h17" stroke={DARK} strokeWidth="2.200" />
              </Svg>
              {name}
            </div>
            {Array.from({ length: n }, (_, i) => (
              <div key={i} className="flex h-[30px] items-center pb-px pl-[48px] tracking-[-0.55px] text-[#3b3a39]">
                <span className="mr-[32px] h-[15px] w-[15px] rounded-[2px] border border-[#797775] bg-[#f7f6f5]" />
                Column{i + 1}
              </div>
            ))}
          </React.Fragment>
        ))}
      </div>
    </section>
  );
}

/* ---------- page tabs and status ---------- */

function PageTabs() {
  return (
    <div className="flex h-[44px] w-[1468px] bg-[#f3f2f1]">
      <div className="ml-[63px] flex w-[30px] flex-col items-center pt-[9px]">
        <Svg w={24} h={18} className="mr-[2px]">
          <path d="M1 1h22v12.500H1zM12 13.500v3M8 17h8" stroke="#252423" strokeWidth="1.500" />
        </Svg>
        <span className="mt-[8px] h-[4px] w-[30px] rounded-full bg-[#117865]" />
      </div>
      <Svg w={17} h={26} className="ml-[31px] mt-[6px]">
        <rect x="1" y="1" width="15" height="23.500" rx="1.500" stroke="#484644" strokeWidth="1.500" />
        <path d="M7 21.500h3" stroke="#484644" strokeWidth="1.500" />
      </Svg>
      <Svg w={6} h={11} className="ml-[26px] mt-[17px]">
        <path d="M6 0v11L0 5.500z" fill="#c8c6c4" />
      </Svg>
      <Svg w={6} h={11} className="ml-[22px] mt-[17px]">
        <path d="M0 0v11l6-5.500z" fill="#c8c6c4" />
      </Svg>
      <div className="ml-[8px] flex w-[95px] items-center justify-center border-x border-b-[5px] border-x-[#a6a6a6] border-b-[#117865] bg-white pt-[4px] text-[15px] tracking-[-0.35px] text-[#252423]">Page 1</div>
      <div className="mt-[2px] flex h-[40px] w-[49px] items-center justify-center bg-[#117865]">
        <Svg w={14} h={14}>
          <path d="M7 0v14M0 7h14" stroke="#fff" strokeWidth="3" />
        </Svg>
      </div>
    </div>
  );
}

function StatusBar() {
  return (
    <div className="flex h-[30px] shrink-0 items-center border-b border-t border-b-black border-t-[#d8d6d4] bg-[#f3f2f1] text-[15px] text-[#605e5c]">
      <span className="w-[1654px] pl-[6px] tracking-[-0.2px]">Page 1 of 1</span>
      <Svg w={155} h={14} className="mt-[2px]">
        <path d="M0 7.500h6M143 7.500h10M148 2.500v10" stroke="#484644" strokeWidth="2" />
        <path d="M11 7h125" stroke="#605e5c" strokeWidth="1.200" />
        <path d="M58 0h5v13h-5zM73 3.500h2v7h-2z" fill="#605e5c" />
      </Svg>
      <span className="w-[67px] pl-[19px]">80%</span>
      <Svg w={21} h={16} className="mt-[2px]">
        <path d="M.8.8h19.400v14.400H.8z" stroke="#605e5c" strokeWidth="1.500" />
        <path d="M4 6V4h3M14 4h3v2M17 10v2.500h-3M7 12.500H4V10" stroke="#605e5c" strokeWidth="1.300" />
      </Svg>
    </div>
  );
}

/* ---------- taskbar ---------- */

function Grad({ id, a, b, c }: { id: string; a: string; b: string; c?: string }) {
  return (
    <linearGradient id={id} x1="0" y1="0" x2="1" y2="1">
      <stop offset="0" stopColor={a} />
      {c && <stop offset=".5" stopColor={c} />}
      <stop offset="1" stopColor={b} />
    </linearGradient>
  );
}

type TaskApp = { k: string; dot?: boolean; active?: boolean; art: React.ReactNode };

const apps: TaskApp[] = [
  {
    k: "task",
    art: (
      <>
        <rect y="8" width="22" height="20" rx="1" fill="#2d2d2d" />
        <rect x="8" y="1" width="22" height="19" rx="1" fill="#fff" fillOpacity=".75" />
      </>
    ),
  },
  {
    k: "chat",
    art: (
      <>
        <Grad id="gc" a="#9a6fa3" b="#4b53bc" />
        <path d="M15 1a14 14 0 110 28H1c1.500-2 1.500-4 .5-6A14 14 0 0115 1z" fill="url(#gc)" />
        <path d="M7 9h11v12H7zM20 13l4-3v10l-4-3z" fill="#fff" />
      </>
    ),
  },
  {
    k: "edge",
    art: (
      <>
        <Grad id="ge" a="#35c1f1" b="#67e05a" c="#28c4b8" />
        <Grad id="gf" a="#1b9de2" b="#0c3f8c" />
        <path d="M0 15C0 6 7 0 15 0s15 6 15 12c0 5-4 8-8 8-3 0-4-1-3-3 1-3-1-7-6-7S1 13 0 15z" fill="url(#ge)" />
        <path d="M0 15C1 10 7 8 12 10c-3 2-4 6-2 10s8 7 16 3c-4 6-12 8-17 6C3 27 0 21 0 15z" fill="url(#gf)" />
      </>
    ),
  },
  {
    k: "files",
    dot: true,
    art: (
      <>
        <path d="M0 2h10l3 4H0z" fill="#e0a100" />
        <Grad id="gfo" a="#ffdf72" b="#f9b92a" />
        <path d="M0 6h30v22H0z" fill="url(#gfo)" />
        <path d="M5 28v-5c0-2 1-3 3-3h15c2 0 3 1 3 3v5z" fill="#1474c4" />
        <path d="M9 24h13" stroke="#0b4f8f" strokeWidth="2" />
      </>
    ),
  },
  {
    k: "store",
    dot: true,
    art: (
      <>
        <path d="M8 6V2h13v4" stroke="#38b6ee" strokeWidth="2" />
        <Grad id="gs" a="#0f6cbd" b="#1b3358" />
        <path d="M1 6h28v20c0 2-1 3-3 3H4c-2 0-3-1-3-3z" fill="url(#gs)" />
        <path d="M9 11h5.500v5.500H9z" fill="#f25022" />
        <path d="M15.500 11H21v5.500h-5.500z" fill="#7fba00" />
        <path d="M9 17.500h5.500V23H9z" fill="#00a4ef" />
        <path d="M15.500 17.500H21V23h-5.500z" fill="#ffb900" />
      </>
    ),
  },
  {
    k: "chrome",
    dot: true,
    art: (
      <>
        <circle cx="15" cy="14.500" r="14.500" fill="#fbc116" />
        <path d="M2.400 7.300A14.500 14.500 0 0015 29l6.300-11L15 14.500l-6 3.500z" fill="#229342" />
        <path d="M2.400 7.300A14.500 14.500 0 0127.600 7.300H15l-7 8z" fill="#e33b2e" />
        <circle cx="15" cy="14.500" r="7.200" fill="#fff" />
        <circle cx="15" cy="14.500" r="5.600" fill="#3b7ded" />
        <circle cx="26" cy="4" r="10" fill="#c2185b" />
        <text x="26" y="8" fontSize="11.500" textAnchor="middle" fill="#fff">R</text>
      </>
    ),
  },
  {
    k: "m365",
    art: (
      <>
        <Grad id="gm" a="#3a4fc4" b="#a06fd8" />
        <Grad id="gn" a="#6a7be8" b="#4cc3ee" />
        <Grad id="go" a="#7a58c4" b="#c08ae6" />
        <path d="M14 1C8 4 2 7 2 11v9c0 3 3 5 7 7-1-5-1-9 1-12 2-2 5-2 5-5 0-4-2-5-1-9z" fill="url(#gm)" />
        <path d="M14 1c2-1 4 1 8 3 4 2 6 4 6 8v6c-2-4-7-6-13-8z" fill="url(#gn)" />
        <path d="M28 16v4c0 3-4 5-8 7.500-5 3-8 2-12-1.500 6 1 12-1 12-9l1-4c4 1 6 2 7 3z" fill="url(#go)" />
      </>
    ),
  },
  {
    k: "word",
    dot: true,
    art: (
      <>
        <path d="M4 0h22v22L2 27z" fill="#dfe8f5" stroke="#8aa4cc" />
        <path d="M5 1h20v4L4 7z" fill="#9db6dd" />
        <path d="M9 5l20 2-1 22-19-5z" fill="#fff" stroke="#b5c4dd" />
        <text x="7" y="19" fontSize="14" fontWeight="700" fill="#2a4f9a" className="font-['Liberation_Serif',serif]">W</text>
        <path d="M22 10h6M22 14h6M22 18h5M10 21l17 1M10 24l17 1.500" stroke="#2a4f9a" strokeWidth="1.600" />
      </>
    ),
  },
  {
    k: "pbi",
    active: true,
    art: (
      <>
        <path d="M0 0h30v30H0z" fill="#0b78d4" />
        <path d="M16 0h12v30H16z" fill="#d99b0c" />
        <path d="M26 0h2v30h-2z" fill="#b97a08" />
        <path d="M9 7h10v23H9z" fill="#f0c030" />
        <path d="M3 15h10v15H3z" fill="#fbdc6a" />
      </>
    ),
  },
  {
    k: "term",
    dot: true,
    art: (
      <>
        <rect y="3" width="30" height="23" rx="2" fill="#2d2f33" />
        <path d="M0 8V5c0-1 1-2 2-2h8v5z" fill="#cfcfcf" />
        <path d="M10 3h10v5H10z" fill="#9b9b9b" />
        <path d="M20 3h8c1 0 2 1 2 2v3H20z" fill="#6e6e6e" />
        <path d="M5 11l5 5-5 5M13 21h9" stroke="#f0f0f0" strokeWidth="2.600" />
      </>
    ),
  },
  {
    k: "code",
    dot: true,
    art: (
      <>
        <path d="M22 0l8 3.500v22L22 29z" fill="#27a5ee" />
        <path d="M22 0v8.500L4 23l-4-3.500z" fill="#0d7cc7" />
        <path d="M22 29v-8.500L4 6 0 9.500z" fill="#0a6cb4" />
      </>
    ),
  },
  {
    k: "photos",
    dot: true,
    art: (
      <>
        <Grad id="gp" a="#1d5fc0" b="#2f9be8" />
        <rect x="2" y="1" width="26" height="27" rx="3" fill="url(#gp)" />
        <path d="M3 26l12-15c1-1 2-1 3 0l10 14c0 2-1 3-2 3H5z" fill="#37c1f0" />
        <circle cx="22" cy="6" r="2.500" fill="#fff" />
      </>
    ),
  },
  {
    k: "xls",
    dot: true,
    art: (
      <>
        <path d="M3 0h23v23L1 27z" fill="#eef6e8" stroke="#6aaa45" strokeWidth="1.500" />
        <path d="M8 5l21 2-1 21-20-4z" fill="#fff" stroke="#a9cf95" />
        <path d="M20 9h3.500v4H20zM24.500 9H28v4h-3.500zM20 14.500h3.500V19H20zM24.500 14.500H28V19h-3.500zM11 20.500h4V24h-4zM16 20.500h3.500V25H16zM20.500 20.500H24V26h-3.500z" fill="#4e9b2d" />
        <path d="M8 6l9 12M17 6L7 18" stroke="#1f6b1c" strokeWidth="3" />
      </>
    ),
  },
];

function Taskbar() {
  return (
    <footer className="flex h-[60px] shrink-0 items-center bg-[#d9d9d9] text-[15px] leading-[20px] text-[#1b1b1b]">
      <div className="flex w-[447px] items-center pl-[26px]">
        <Svg w={29} h={29} className="mr-[9px]">
          <linearGradient id="moon" x1="0" y1="0" x2="0" y2="1">
            <stop offset="0" stopColor="#fbc44a" />
            <stop offset="1" stopColor="#f07c1c" />
          </linearGradient>
          <path d="M19 0c13 7 12 24-1 28C10 30 3 27 0 20c10 2 20-5 19-20z" fill="url(#moon)" />
        </Svg>
        <div className="pb-[2px]">
          <div>28°C</div>
          <div className="text-[#5a5a5a]">Clear</div>
        </div>
      </div>
      <Svg w={29} h={29}>
        <Grad id="win" a="#3cc4f8" b="#0067c0" />
        <path d="M0 0h14v14H0zM15 0h14v14H15zM0 15h14v14H0zM15 15h14v14H15z" fill="url(#win)" />
      </Svg>
      <div className="ml-[18px] flex h-[39px] w-[273px] items-center rounded-full border-b border-[#c4c4c4] bg-[#f4f4f4] pl-[14px] pr-[7px] text-[16.5px] tracking-[-0.3px] text-[#5c5c5c]">
        <Svg w={18} h={19} className="mr-[13px]">
          <circle cx="8" cy="8" r="6.800" stroke="#222" strokeWidth="1.900" />
          <path d="M13 13l4.500 5" stroke="#222" strokeWidth="2.400" />
        </Svg>
        <span className="flex-1 pt-px">Search</span>
        <Svg w={25} h={26}>
          <Grad id="bing" a="#2ed0f0" b="#2436b8" c="#1b7fe6" />
          <path d="M1 25V13A11.500 12 0 1112.500 25z" fill="#fff" stroke="url(#bing)" strokeWidth="2" />
          <path d="M8.500 6l3 1.500V17l5-2.500-3-2-1-3 6 3c1.500 3 0 5-2 6l-4.500 2.500-3.500-2.500z" fill="#1b66dd" />
        </Svg>
      </div>
      <div className="ml-[3px] flex">
        {apps.map((a) => (
          <div key={a.k} className="flex w-[55px] justify-center">
            <div className={`flex h-[49px] w-[48px] flex-col items-center rounded-[5px] ${a.active ? "border border-[#cfcfcf] bg-[#efefef] pt-[8px]" : "pt-[9px]"}`}>
              <Svg w={30} h={30} className="overflow-visible">
                {a.art}
              </Svg>
              <span className={`mt-[5px] h-[4px] rounded-full ${a.active ? "w-[20px] bg-[#0b78d4]" : a.dot ? "w-[7px] bg-[#868686]" : "w-0"}`} />
            </div>
          </div>
        ))}
      </div>
      <div className="flex flex-1 items-center pl-[31px]">
        <Svg w={14} h={9}>
          <path d="M1 8l6-6 6 6" stroke="#222" strokeWidth="1.500" />
        </Svg>
        <Svg w={22} h={18} className="ml-[22px]">
          <path d="M6 15.500a4.500 4.500 0 01-.5-9A6 6 0 0117 7a4.300 4.300 0 01-.5 8.500zM3 4l16 12" stroke="#222" strokeWidth="1.500" />
        </Svg>
        <Svg w={22} h={22} className="ml-[18px]">
          <path d="M2 9a8.500 8.500 0 0115-4M17 1v5h-5M2 17v-5h5M2.500 13a8.500 8.500 0 007 6" stroke="#222" strokeWidth="1.500" />
          <circle cx="16" cy="16" r="4" fill="#ef8218" />
        </Svg>
        <div className="ml-[19px] w-[34px] pb-px text-center">
          <div>ENG</div>
          <div>IN</div>
        </div>
        <Svg w={20} h={16} className="ml-[21px]">
          <path d="M1 6a13 13 0 0118 0M4 9a9 9 0 0112 0M6.800 12a5 5 0 016.400 0" stroke="#222" strokeWidth="1.500" />
          <circle cx="10" cy="14" r="1.600" fill="#222" />
        </Svg>
        <Svg w={20} h={18} className="ml-[9px]">
          <path d="M1 6.500h4L10 3v12l-5-3.500H1zM13 6l6 6M19 6l-6 6" stroke="#222" strokeWidth="1.400" />
        </Svg>
        <Svg w={21} h={16} className="ml-[10px]">
          <path d="M3 4h14c1 0 2 1 2 2v6c0 1-1 2-2 2H5" stroke="#222" strokeWidth="1.400" />
          <path d="M9 6h8v6H7z" fill="#222" />
          <path d="M1 7h7v4c0 2-1 3-3.500 3S1 13 1 11zM3 7V4M6 7V4M4.500 14v2" fill="#222" stroke="#222" strokeWidth="1.200" />
        </Svg>
        <div className="w-[99px] whitespace-nowrap pb-px text-right tracking-[-0.02px]">
          <div>00:59</div>
          <div>25-09-2023</div>
        </div>
        <Svg w={18} h={19} className="ml-[9px]">
          <path d="M3 13V8a5.500 5.500 0 0111 0v5l1.500 2H1.500zM6.500 16c.5 2 3.500 2 4 0" fill="#222" stroke="#222" strokeWidth="1.200" />
          <path d="M8 5h6l-6 6h6" stroke="#d9d9d9" strokeWidth="1.300" />
        </Svg>
      </div>
    </footer>
  );
}

export default function App() {
  return (
    <div className="flex h-[1080px] w-[1920px] flex-col overflow-hidden bg-[#fafafa] font-['Open_Sans','Noto_Sans',sans-serif] tracking-[-0.45px]">
      <TitleBar />
      <MenuBar />
      <Ribbon />
      <div className="flex h-[790px] shrink-0">
        <div className="flex flex-col">
          <div className="flex h-[746px]">
            <LeftNav />
            <Canvas />
            <FiltersPane />
          </div>
          <PageTabs />
        </div>
        <VisualizationsPane />
        <DataPane />
      </div>
      <StatusBar />
      <Taskbar />
    </div>
  );
}
